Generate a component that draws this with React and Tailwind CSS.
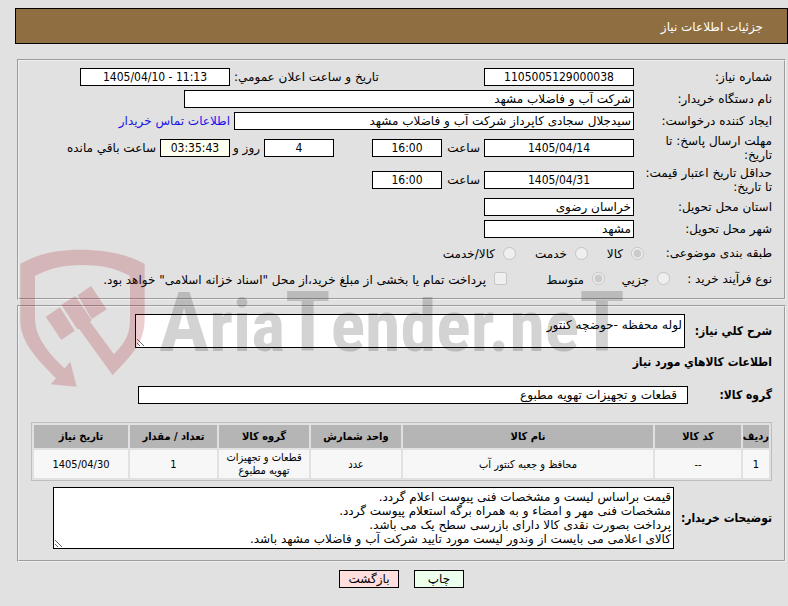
import React from 'react'
import clsx from 'clsx'

const FIELD = 'h-[18px] border border-black bg-white px-0.5 text-[12px] leading-4 text-black outline-none'
const NUMERIC = "text-center font-['DejaVu_Sans_Condensed','DejaVu_Sans',sans-serif]"
const HEADING = "text-[12px] font-bold font-['DejaVu_Sans_Condensed','DejaVu_Sans',sans-serif]"
const BOX = 'border border-black bg-white px-0.5 text-[12px] leading-[14px] text-black outline-none'

const COLUMNS = [
  { title: 'ردیف', width: 'w-[26px]' },
  { title: 'کد کالا', width: 'w-[86px]' },
  { title: 'نام کالا', width: '' },
  { title: 'واحد شمارش', width: 'w-[90px]' },
  { title: 'گروه کالا', width: 'w-[90px]' },
  { title: 'تعداد / مقدار', width: 'w-[87px]' },
  { title: 'تاریخ نیاز', width: 'w-[94px]' },
]

const ITEMS = [
  ['1', '--', 'محافظ و جعبه کنتور آب', 'عدد', 'قطعات و تجهیزات تهویه مطبوع', '1', '1405/04/30'],
]

const NOTES = [
  'قیمت براساس لیست و مشخصات فنی پیوست اعلام گردد.',
  'مشخصات فنی مهر و امضاء و به همراه برگه استعلام پیوست گردد.',
  'پرداخت بصورت نقدی کالا دارای بازرسی سطح یک می باشد.',
  'کالای اعلامی می بایست از وندور لیست مورد تایید شرکت آب و فاضلاب مشهد باشد.',
].join('\n')

function Row({ id, label, tall, children }) {
  return (
    <div className={clsx('flex items-center', tall ? 'h-8' : 'h-[22px]')}>
      <label htmlFor={id} className="w-[138px] shrink-0 pl-2.5">{label}</label>
      <div className="flex min-w-0 flex-1 items-center gap-1">{children}</div>
    </div>
  )
}

function Field({ className, ...props }) {
  return <input type="text" readOnly className={clsx(FIELD, className)} {...props} />
}

function Choice({ type = 'radio', name, label, checked, className }) {
  return (
    <label className={clsx('flex shrink-0 items-center gap-2 whitespace-nowrap', className)}>
      <input type={type} name={name} defaultChecked={checked} disabled className="m-0 size-[13px] shrink-0" />
      <span className="pt-0.5">{label}</span>
    </label>
  )
}

function Panel({ className, children }) {
  return (
    <section className={clsx('border-2 border-[#f0f0f0] px-3 [border-style:groove]', className)}>
      {children}
    </section>
  )
}

function Watermark() {
  return (
    <div dir="ltr" aria-hidden="true" className="pointer-events-none absolute top-[247px] left-[18px] flex">
      <svg viewBox="54 21 384 426" className="h-[142px] w-[128px] shrink-0 fill-[#aa0f19] opacity-20">
        <path d="M61 72C110 43 165 29 240 29C315 29 385 43 434 72V235C434 310 395 345 338 406L237 266L232 268L184 194L226 168L275 240L270 245L342 343C372 310 390 290 390 235V108C350 86 310 75 245 75C190 75 145 86 105 108V235C105 290 145 340 194 385L211 365L230 440L152 433L168 415C115 360 61 310 61 240Z" />
        <path d="M137 230L180 202L224 272L184 300Z" />
        <path d="M233 166L273 138L320 208L275 237Z" />
      </svg>
      <svg viewBox="0 0 500 142" className="h-[142px] w-[500px] shrink-0 opacity-[0.17]">
        <text x="13" y="104" fontSize="72" fontWeight="700" fontFamily="'Liberation Sans Narrow', 'Roboto Condensed', 'DejaVu Sans Condensed', sans-serif">
          <tspan fontSize="84">A</tspan>ria<tspan fontSize="84">T</tspan>ender.ne<tspan fontSize="84">T</tspan>
        </text>
      </svg>
    </div>
  )
}

export default function App() {
  return (
    <div
      dir="rtl"
      lang="fa"
      className="relative min-h-screen bg-[#e1e1e1] pt-2 font-['DejaVu_Sans',sans-serif] text-[12px] leading-[14px] text-black"
    >
      <header className="ml-[15px] flex h-9 items-center border border-black bg-[#8f6e42] pt-0.5 pr-6">
        <h1 className="text-white">جزئیات اطلاعات نیاز</h1>
      </header>

      <main className="mr-0.5 ml-[17px]">
        <Panel className="mt-[15px] h-[241px] pt-[5px]">
          <Row id="number" label="شماره نیاز:">
            <Field id="number" className={clsx('w-[150px]', NUMERIC)} defaultValue="1105005129000038" />
            <label htmlFor="announced" className="mr-auto">تاریخ و ساعت اعلان عمومي:</label>
            <Field id="announced" dir="ltr" className={clsx('ml-[49px] w-[150px]', NUMERIC)} defaultValue="1405/04/10 - 11:13" />
          </Row>
          <Row id="buyer" label="نام دستگاه خریدار:">
            <Field id="buyer" className="w-[450px]" defaultValue="شرکت آب و فاضلاب مشهد" />
          </Row>
          <Row id="creator" label="ایجاد کننده درخواست:">
            <Field id="creator" className="w-[400px]" defaultValue="سیدجلال سجادی کاپرداز شرکت آب و فاضلاب مشهد" />
            <a href="#contact" className="whitespace-nowrap text-[#2010e8]">اطلاعات تماس خریدار</a>
          </Row>
          <Row id="deadline" label="مهلت ارسال پاسخ: تا تاریخ:" tall>
            <Field id="deadline" className={clsx('w-[150px]', NUMERIC)} defaultValue="1405/04/14" />
            <label htmlFor="deadline-time" className="w-[34px]">ساعت</label>
            <Field id="deadline-time" className={clsx('w-[70px]', NUMERIC)} defaultValue="16:00" />
            <Field aria-label="روز" className={clsx('mr-[34px] w-[70px]', NUMERIC)} defaultValue="4" />
            <span className="w-[26px] whitespace-nowrap">روز و</span>
            <input
              type="text"
              readOnly
              aria-label="ساعت باقي مانده"
              className={clsx('h-[18px] w-[70px] border border-black bg-[#fffff0] px-0.5 leading-4 outline-none', NUMERIC)}
              defaultValue="03:35:43"
            />
            <span className="whitespace-nowrap">ساعت باقي مانده</span>
          </Row>
          <Row id="valid" label="حداقل تاریخ اعتبار قیمت: تا تاریخ:" tall>
            <Field id="valid" className={clsx('w-[150px]', NUMERIC)} defaultValue="1405/04/31" />
            <label htmlFor="valid-time" className="w-[34px]">ساعت</label>
            <Field id="valid-time" className={clsx('w-[70px]', NUMERIC)} defaultValue="16:00" />
          </Row>
          <Row id="province" label="استان محل تحویل:">
            <Field id="province" className="w-[150px]" defaultValue="خراسان رضوی" />
          </Row>
          <Row id="city" label="شهر محل تحویل:">
            <Field id="city" className="w-[150px]" defaultValue="مشهد" />
          </Row>

          <div className="flex h-[26px] items-center">
            <span className="w-[128px] shrink-0">طبقه بندی موضوعی:</span>
            <Choice name="subject" label="کالا" checked className="w-14" />
            <Choice name="subject" label="خدمت" className="w-[72px]" />
            <Choice name="subject" label="کالا/خدمت" />
          </div>
          <div className="flex h-[25px] items-center">
            <span className="w-[102px] shrink-0">نوع فرآیند خرید :</span>
            <Choice name="process" label="جزیي" className="w-[65px]" />
            <Choice name="process" label="متوسط" checked className="w-[98px]" />
            <Choice type="checkbox" name="bonds" label={'پرداخت تمام یا بخشی از مبلغ خرید،از محل "اسناد خزانه اسلامی" خواهد بود.'} />
          </div>
        </Panel>

        <Panel className="mt-[5px] pt-[7px] pb-[11px]">
          <div className="flex items-center">
            <label htmlFor="summary" className={clsx('w-[87px] shrink-0', HEADING)}>شرح کلي نیاز:</label>
            <textarea id="summary" readOnly className={clsx(BOX, 'h-[34px] w-[550px] py-[3px]')} defaultValue="لوله محفظه -حوضچه کنتور" />
          </div>
          <h2 className={clsx('py-[7px]', HEADING)}>اطلاعات کالاهاي مورد نیاز</h2>
          <div className="mt-2.5 flex h-[18px] items-center">
            <label htmlFor="group" className={clsx('w-[84px] shrink-0', HEADING)}>گروه کالا:</label>
            <input id="group" type="text" readOnly className="h-[18px] w-[550px] border border-black bg-white px-2.5 leading-4 outline-none" defaultValue="قطعات و تجهیزات تهویه مطبوع" />
          </div>

          <div className="mt-[18px] font-['DejaVu_Sans_Condensed','DejaVu_Sans',sans-serif] text-[11px]">
            <table className="w-full table-fixed border-separate border-spacing-0.5 border border-[#bdbdbd] text-center">
              <thead>
                <tr className="h-[23px]">
                  {COLUMNS.map(col => (
                    <th key={col.title} className={clsx('bg-[#b5b5b5] p-0 font-bold whitespace-nowrap', col.width)}>
                      {col.title}
                    </th>
                  ))}
                </tr>
              </thead>
              <tbody>
                {ITEMS.map(item => (
                  <tr key={item[0]} className="h-7">
                    {item.map((cell, i) => (
                      <td key={i} className="bg-[#f7f7f7] p-0 leading-[13px]">{cell}</td>
                    ))}
                  </tr>
                ))}
              </tbody>
            </table>
          </div>

          <div className="mt-1.5 flex items-center">
            <label htmlFor="notes" className={clsx('w-[98px] shrink-0', HEADING)}>توضیحات خریدار:</label>
            <textarea id="notes" readOnly className={clsx(BOX, 'ml-[22px] h-[62px] min-w-0 flex-1 py-0.5')} defaultValue={NOTES} />
          </div>
        </Panel>

        <div className="mt-2 flex justify-center gap-[15px]">
          <button type="button" className="h-[18px] w-[50px] border border-black bg-[#edffed] leading-4">چاپ</button>
          <button type="button" className="h-[18px] w-[60px] border border-black bg-[#ffdede] leading-4">بازگشت</button>
        </div>
      </main>

      <Watermark />
    </div>
  )
}
